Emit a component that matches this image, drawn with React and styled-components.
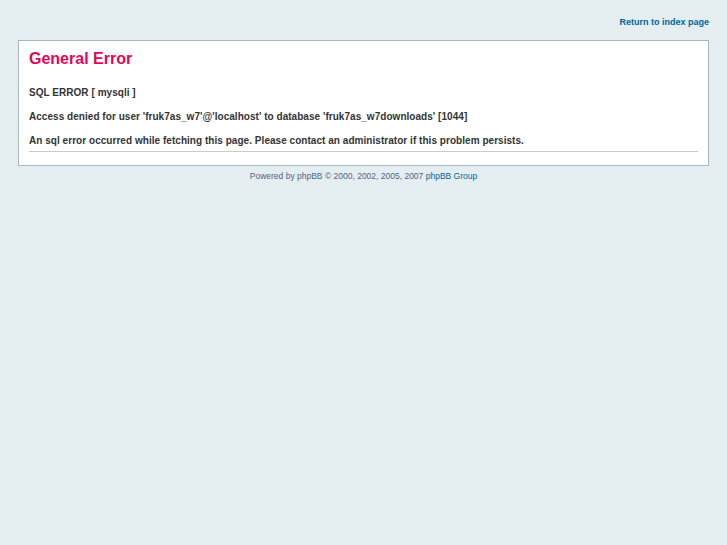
import React from 'react';
import styled, { createGlobalStyle } from 'styled-components';

const GlobalStyle = createGlobalStyle`
  * { margin: 0; padding: 0; box-sizing: border-box; }
  html, body { height: 100%; }
  body {
    background: #e4edf0;
    color: #536482;
    font-family: "Liberation Sans", Arial, sans-serif;
    font-size: 10px;
  }
  a { color: #006699; text-decoration: none; }
`;

const Wrap = styled.div`
  padding: 0 18px 15px 18px;
`;

const Header = styled.div`
  height: 40px;
  display: flex;
  justify-content: flex-end;
  align-items: center;
  padding-top: 4px;
`;

const HeaderLink = styled.a`
  font-weight: bold;
  font-size: 9px;
`;

const Panel = styled.div`
  background: #ffffff;
  border: 1px solid #a9b8c2;
  padding: 8px 10px 13px 10px;
`;

const Title = styled.h1`
  color: #df075c;
  font-size: 16px;
  line-height: 20px;
  font-weight: bold;
`;

const Message = styled.div`
  margin-top: 18px;
  padding-bottom: 4px;
  border-bottom: 1px solid #cccccc;
  color: #333333;
  font-weight: bold;
  font-size: 10px;
  letter-spacing: 0.04px;
  line-height: 12px;
  display: flex;
  flex-direction: column;
  gap: 12px;
`;

const Footer = styled.div`
  text-align: center;
  font-size: 8.5px;
  margin-top: 5px;
`;

export default function App() {
  return (
    <>
      <GlobalStyle />
      <Wrap>
        <Header>
          <HeaderLink href="#">Return to index page</HeaderLink>
        </Header>
        <Panel>
          <Title>General Error</Title>
          <Message>
            <span>SQL ERROR [ mysqli ]</span>
            <span>Access denied for user 'fruk7as_w7'@'localhost' to database 'fruk7as_w7downloads' [1044]</span>
            <span>An sql error occurred while fetching this page. Please contact an administrator if this problem persists.</span>
          </Message>
        </Panel>
        <Footer>
          Powered by phpBB &copy; 2000, 2002, 2005, 2007 <a href="#">phpBB Group</a>
        </Footer>
      </Wrap>
    </>
  );
}
